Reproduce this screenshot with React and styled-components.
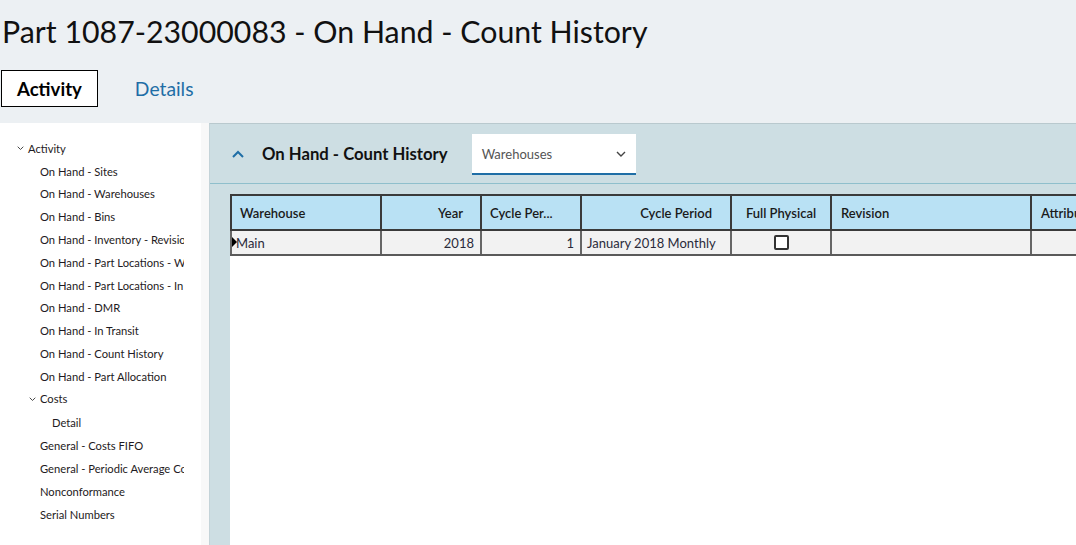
import React from "react";
import styled, { createGlobalStyle } from "styled-components";

const Global = createGlobalStyle`
  html, body { margin: 0; padding: 0; }
  body { font-family: "Lato", "Liberation Sans", sans-serif; background: #ecf0f3; }
  * { box-sizing: border-box; }
`;

const Page = styled.div`
  width: 1076px;
  height: 545px;
  overflow: hidden;
  background: #ecf0f3;
  display: flex;
  flex-direction: column;
`;

const Title = styled.h1`
  margin: 0;
  padding: 12px 0 0 2px;
  height: 56px;
  font-size: 30.3px;
  font-weight: 400;
  line-height: 38px;
  color: #111;
  white-space: nowrap;
`;

const Tabs = styled.div`
  display: flex;
  align-items: center;
  gap: 36px;
  padding: 14px 0 0 1px;
`;

const Tab = styled.div`
  height: 37px;
  display: flex;
  align-items: center;
  padding: 0 ${(p) => (p.$active ? "15px" : "0")};
  border: ${(p) => (p.$active ? "1px solid #000" : "1px solid transparent")};
  background: ${(p) => (p.$active ? "#fff" : "transparent")};
  font-size: ${(p) => (p.$active ? "18.6px" : "19.3px")};
  font-weight: ${(p) => (p.$active ? 700 : 400)};
  color: ${(p) => (p.$active ? "#000" : "#1f6ea6")};
`;

const Body = styled.div`
  flex: 1;
  display: flex;
  margin-top: 16px;
  min-height: 0;
`;

const Sidebar = styled.div`
  width: 209px;
  display: flex;
  background: #fff;
`;

const TreeArea = styled.div`
  width: 201px;
  padding: 14px 0 0 0;
  display: flex;
  flex-direction: column;
`;

const Track = styled.div`
  width: 8px;
  background: #f8f8f8;
`;

const TreeItem = styled.div`
  display: flex;
  align-items: center;
  flex: none;
  height: ${(p) => p.$h || 22.8}px;
  padding-left: ${(p) => p.$indent}px;
  font-size: 11.2px;
  color: #1e1a22;
  white-space: nowrap;
  overflow: hidden;
  width: 184px;
`;

const Caret = styled.span`
  width: 8px;
  display: inline-flex;
  justify-content: center;
  margin-right: 4px;
  margin-left: -12px;
`;

const Main = styled.div`
  flex: 1;
  background: #cddee3;
  border-top: 1px solid #b9c9ce;
  border-left: 1px solid #c4d3d8;
  display: flex;
  flex-direction: column;
`;

const PanelHeader = styled.div`
  height: 60px;
  border-bottom: 1px solid #8fbfcc;
  display: flex;
  align-items: center;
  padding-left: 22px;
`;

const Collapse = styled.span`
  display: inline-flex;
  width: 14px;
  margin-right: 16px;
`;

const PanelTitle = styled.div`
  font-size: 16.7px;
  font-weight: 700;
  color: #111;
  margin-right: 24px;
`;

const Select = styled.div`
  width: 164px;
  height: 41px;
  background: #fff;
  border-bottom: 2px solid #1f6ea6;
  display: flex;
  align-items: center;
  justify-content: space-between;
  padding: 2px 10px 0 10px;
  font-size: 13px;
  color: #555;
  margin-top: 1px;
`;

const Content = styled.div`
  flex: 1;
  padding: 10px 0 0 20px;
  display: flex;
`;

const GridBox = styled.div`
  flex: 1;
  background: #fff;
  overflow: hidden;
`;

const Row = styled.div`
  display: flex;
  height: ${(p) => (p.$head ? 37 : 25)}px;
  background: ${(p) => (p.$head ? "#b9e1f4" : "#f2f2f2")};
  border-top: ${(p) => (p.$head ? "2px solid #3a3a3a" : "none")};
  border-bottom: 2px solid ${(p) => (p.$head ? "#3a3a3a" : "#5a5a5a")};
  width: max-content;
`;

const Cell = styled.div`
  width: ${(p) => p.$w}px;
  flex: none;
  display: flex;
  align-items: center;
  justify-content: ${(p) => p.$align || "flex-start"};
  padding: ${(p) => p.$pad || "0 8px"};
  border-left: 2px solid ${(p) => (p.$head ? "#3a3a3a" : "#666")};
  font-size: 13px;
  font-weight: ${(p) => (p.$head ? 600 : 400)};
  color: ${(p) => (p.$head ? "#1a1a1a" : "#2a2a3a")};
  white-space: nowrap;
  overflow: hidden;
  position: relative;
`;

const RowMarker = styled.span`
  position: absolute;
  left: 0;
  top: 6px;
  width: 0;
  height: 0;
  border-top: 5px solid transparent;
  border-bottom: 5px solid transparent;
  border-left: 5px solid #000;
`;

const Check = styled.span`
  width: 15px;
  height: 15px;
  border: 2px solid #333;
  border-radius: 2px;
  background: #fff;
`;

const ChevDown = ({ size = 8, color = "#333" }) => (
  <svg width={size} height={size * 0.6} viewBox="0 0 10 6">
    <path d="M1 1 L5 5 L9 1" fill="none" stroke={color} strokeWidth="1.4" />
  </svg>
);

const ChevUp = () => (
  <svg width="12" height="8" viewBox="0 0 12 8">
    <path d="M1 7 L6 2 L11 7" fill="none" stroke="#1f6ea6" strokeWidth="2" />
  </svg>
);

const tree = [
  { t: "Activity", indent: 28, caret: true },
  { t: "On Hand - Sites", indent: 40 },
  { t: "On Hand - Warehouses", indent: 40 },
  { t: "On Hand - Bins", indent: 40 },
  { t: "On Hand - Inventory - Revision", indent: 40 },
  { t: "On Hand - Part Locations - Warehouse", indent: 40 },
  { t: "On Hand - Part Locations - In Transit", indent: 40 },
  { t: "On Hand - DMR", indent: 40 },
  { t: "On Hand - In Transit", indent: 40 },
  { t: "On Hand - Count History", indent: 40 },
  { t: "On Hand - Part Allocation", indent: 40 },
  { t: "Costs", indent: 40, caret: true, h: 22 },
  { t: "Detail", indent: 52, h: 24.5 },
  { t: "General - Costs FIFO", indent: 40 },
  { t: "General - Periodic Average Cost", indent: 40 },
  { t: "Nonconformance", indent: 40 },
  { t: "Serial Numbers", indent: 40 },
];

const cols = [
  { h: "Warehouse", w: 150, ha: "flex-start", hp: "0 8px", v: "Main", va: "flex-start", vp: "0 4px", marker: true },
  { h: "Year", w: 100, ha: "flex-end", hp: "0 17px 0 8px", v: "2018", va: "flex-end", vp: "0 6px" },
  { h: "Cycle Per...", w: 100, ha: "flex-start", hp: "0 8px", v: "1", va: "flex-end", vp: "0 6px" },
  { h: "Cycle Period", w: 150, ha: "flex-end", hp: "0 18px 0 8px", v: "January 2018 Monthly", va: "flex-start", vp: "0 5px" },
  { h: "Full Physical", w: 100, ha: "center", hp: "0 4px", check: true, va: "center" },
  { h: "Revision", w: 200, ha: "flex-start", hp: "0 9px", v: "", va: "flex-start" },
  { h: "Attribute Set", w: 150, ha: "flex-start", hp: "0 9px", v: "", va: "flex-start" },
];

export default function App() {
  return (
    <Page>
      <Global />
      <Title>Part 1087-23000083 - On Hand - Count History</Title>
      <Tabs>
        <Tab $active>Activity</Tab>
        <Tab>Details</Tab>
      </Tabs>
      <Body>
        <Sidebar>
          <TreeArea>
            {tree.map((it, i) => (
              <TreeItem key={i} $indent={it.indent} $h={it.h}>
                {it.caret && (
                  <Caret>
                    <ChevDown size={7} color="#444" />
                  </Caret>
                )}
                {it.t}
              </TreeItem>
            ))}
          </TreeArea>
          <Track />
        </Sidebar>
        <Main>
          <PanelHeader>
            <Collapse>
              <ChevUp />
            </Collapse>
            <PanelTitle>On Hand - Count History</PanelTitle>
            <Select>
              <span>Warehouses</span>
              <ChevDown size={10} color="#444" />
            </Select>
          </PanelHeader>
          <Content>
            <GridBox>
              <Row $head>
                {cols.map((c, i) => (
                  <Cell key={i} $head $w={c.w} $align={c.ha} $pad={c.hp}>
                    {c.h}
                  </Cell>
                ))}
              </Row>
              <Row>
                {cols.map((c, i) => (
                  <Cell key={i} $w={c.w} $align={c.va} $pad={c.vp}>
                    {c.marker && <RowMarker />}
                    {c.check ? <Check /> : c.v}
                  </Cell>
                ))}
              </Row>
            </GridBox>
          </Content>
        </Main>
      </Body>
    </Page>
  );
}
